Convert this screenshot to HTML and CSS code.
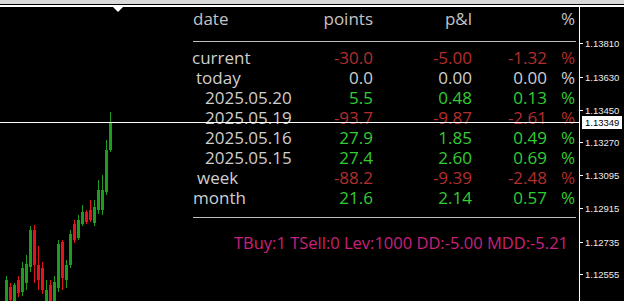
FILE: index.html
```html
<!DOCTYPE html>
<html>
<head>
<meta charset="utf-8">
<link rel="stylesheet" href="styles.css">
</head>
<body>
<div class="topbar"></div>
<div class="chart">
  <div class="plot">
    <svg class="candles" width="579" height="294" viewBox="0 7 579 294">
      <polygon points="113,7 123,7 118,12" fill="#ffffff"/>
      <g stroke-width="1">
        <line x1="6.5" y1="276" x2="6.5" y2="301" stroke="#1f9c1f"/><rect x="5" y="280" width="3" height="21" fill="#1f9c1f"/>
        <line x1="10.5" y1="283" x2="10.5" y2="301" stroke="#e3141c"/><rect x="9" y="287" width="3" height="13" fill="#e3141c"/>
        <line x1="14.5" y1="283" x2="14.5" y2="301" stroke="#1f9c1f"/><rect x="13" y="285" width="3" height="16" fill="#1f9c1f"/>
        <line x1="18.5" y1="276" x2="18.5" y2="297" stroke="#e3141c"/><rect x="17" y="280" width="3" height="13" fill="#e3141c"/>
        <line x1="22.5" y1="262" x2="22.5" y2="296" stroke="#1f9c1f"/><rect x="21" y="268" width="3" height="24" fill="#1f9c1f"/>
        <line x1="26.5" y1="255" x2="26.5" y2="290" stroke="#1f9c1f"/><rect x="25" y="264" width="3" height="19" fill="#1f9c1f"/>
        <line x1="30.5" y1="226" x2="30.5" y2="272" stroke="#1f9c1f"/><rect x="29" y="230" width="3" height="37" fill="#1f9c1f"/>
        <line x1="34.5" y1="225" x2="34.5" y2="283" stroke="#e3141c"/><rect x="33" y="230" width="3" height="35" fill="#e3141c"/>
        <line x1="38.5" y1="246" x2="38.5" y2="290" stroke="#e3141c"/><rect x="37" y="265" width="3" height="15" fill="#e3141c"/>
        <line x1="42.5" y1="262" x2="42.5" y2="294" stroke="#e3141c"/><rect x="41" y="268" width="3" height="22" fill="#e3141c"/>
        <line x1="46.5" y1="280" x2="46.5" y2="301" stroke="#1f9c1f"/><rect x="45" y="290" width="3" height="11" fill="#1f9c1f"/>
        <line x1="50.5" y1="280" x2="50.5" y2="301" stroke="#e3141c"/><rect x="49" y="285" width="3" height="16" fill="#e3141c"/>
        <line x1="54.5" y1="276" x2="54.5" y2="301" stroke="#1f9c1f"/><rect x="53" y="282" width="3" height="19" fill="#1f9c1f"/>
        <line x1="58.5" y1="240" x2="58.5" y2="292" stroke="#1f9c1f"/><rect x="57" y="244" width="3" height="44" fill="#1f9c1f"/>
        <line x1="62.5" y1="240" x2="62.5" y2="290" stroke="#e3141c"/><rect x="61" y="242" width="3" height="36" fill="#e3141c"/>
        <line x1="66.5" y1="260" x2="66.5" y2="288" stroke="#1f9c1f"/><rect x="65" y="265" width="3" height="15" fill="#1f9c1f"/>
        <line x1="70.5" y1="230" x2="70.5" y2="268" stroke="#1f9c1f"/><rect x="69" y="234" width="3" height="31" fill="#1f9c1f"/>
        <line x1="74.5" y1="220" x2="74.5" y2="243" stroke="#e3141c"/><rect x="73" y="224" width="3" height="16" fill="#e3141c"/>
        <line x1="78.5" y1="215" x2="78.5" y2="240" stroke="#1f9c1f"/><rect x="77" y="220" width="3" height="18" fill="#1f9c1f"/>
        <line x1="82.5" y1="205" x2="82.5" y2="226" stroke="#1f9c1f"/><rect x="81" y="212" width="3" height="12" fill="#1f9c1f"/>
        <line x1="86.5" y1="210" x2="86.5" y2="224" stroke="#e3141c"/><rect x="85" y="212" width="3" height="10" fill="#e3141c"/>
        <line x1="90.5" y1="200" x2="90.5" y2="222" stroke="#e3141c"/><rect x="89" y="210" width="3" height="10" fill="#e3141c"/>
        <line x1="94.5" y1="200" x2="94.5" y2="226" stroke="#1f9c1f"/><rect x="93" y="207" width="3" height="16" fill="#1f9c1f"/>
        <line x1="98.5" y1="180" x2="98.5" y2="214" stroke="#1f9c1f"/><rect x="97" y="190" width="3" height="20" fill="#1f9c1f"/>
        <line x1="102.5" y1="175" x2="102.5" y2="215" stroke="#1f9c1f"/><rect x="101" y="190" width="3" height="20" fill="#1f9c1f"/>
        <line x1="106.5" y1="140" x2="106.5" y2="195" stroke="#1f9c1f"/><rect x="105" y="150" width="3" height="42" fill="#1f9c1f"/>
        <line x1="110.5" y1="112" x2="110.5" y2="152" stroke="#1f9c1f"/><rect x="109" y="122" width="3" height="28" fill="#1f9c1f"/>
      </g>
    </svg>

    <div class="table">
      <div class="row head">
        <span class="lbl p2">date</span><span>points</span><span>p&amp;l</span><span></span><span>%</span>
      </div>
      <div class="sep top"></div>
      <div class="row r"><span class="lbl n p1">current</span><span>-30.0</span><span>-5.00</span><span>-1.32</span><span>%</span></div>
      <div class="row n"><span class="lbl p5">today</span><span>0.0</span><span>0.00</span><span>0.00</span><span>%</span></div>
      <div class="row g"><span class="lbl n p14">2025.05.20</span><span>5.5</span><span>0.48</span><span>0.13</span><span>%</span></div>
      <div class="row r"><span class="lbl n p14">2025.05.19</span><span>-93.7</span><span>-9.87</span><span>-2.61</span><span>%</span></div>
      <div class="row g"><span class="lbl n p14">2025.05.16</span><span>27.9</span><span>1.85</span><span>0.49</span><span>%</span></div>
      <div class="row g"><span class="lbl n p14">2025.05.15</span><span>27.4</span><span>2.60</span><span>0.69</span><span>%</span></div>
      <div class="row r"><span class="lbl n p6">week</span><span>-88.2</span><span>-9.39</span><span>-2.48</span><span>%</span></div>
      <div class="row g"><span class="lbl n p2">month</span><span>21.6</span><span>2.14</span><span>0.57</span><span>%</span></div>
      <div class="sep bottom"></div>
      <div class="stats">TBuy:1 TSell:0 Lev:1000 DD:-5.00 MDD:-5.21</div>
    </div>

    <div class="priceline"></div>
  </div>
  <div class="axis">
    <div class="tick" style="top:30px">1.13810</div>
    <div class="tick" style="top:64px">1.13630</div>
    <div class="tick" style="top:97px">1.13450</div>
    <div class="tick" style="top:129px">1.13270</div>
    <div class="tick" style="top:162px">1.13095</div>
    <div class="tick" style="top:195px">1.12915</div>
    <div class="tick" style="top:229px">1.12735</div>
    <div class="tick" style="top:261px">1.12555</div>
    <div class="tick" style="top:291px">1.12375</div>
    <div class="pricebox">1.13349</div>
  </div>
</div>
</body>
</html>
```

FILE: styles.css
```css
html, body {
  margin: 0;
  padding: 0;
  background: #000;
}
body {
  width: 624px;
  height: 301px;
  overflow: hidden;
  font-family: "Open Sans", "Noto Sans", sans-serif;
}
.topbar {
  height: 4px;
  background: #d9d9d9;
  border-bottom: 1px solid #000;
}
.chart {
  display: flex;
  height: 294px;
  border-top: 2px solid #fff;
}
.plot {
  position: relative;
  width: 579px;
  height: 294px;
  overflow: hidden;
}
.candles {
  position: absolute;
  left: 0;
  top: 0;
  display: block;
}
.table {
  position: absolute;
  left: 191px;
  top: 2px;
  width: 385px;
  font-size: 17px;
  line-height: 20px;
  color: #cfcfcf;
}
.row {
  display: grid;
  grid-template-columns: 110px 72px 99px 75px 28px;
  height: 20px;
  white-space: nowrap;
}
.row span {
  text-align: right;
}
.row span.lbl {
  text-align: left;
}
.head {
  color: #c4c4c4;
}
.p1 { padding-left: 1px; }
.p2 { padding-left: 2px; }
.p5 { padding-left: 5px; }
.p6 { padding-left: 6px; }
.p14 { padding-left: 14px; }
.r { color: #b32e2e; }
.g { color: #33cc33; }
.n { color: #cfcfcf; }
.sep {
  height: 1px;
  background: #bdbdbd;
  margin-left: 2px;
}
.sep.top {
  margin-top: 12px;
  margin-bottom: 6px;
}
.sep.bottom {
  margin-top: 9px;
}
.stats {
  margin-top: 15px;
  text-align: right;
  padding-right: 8px;
  font-size: 16.5px;
  line-height: 20px;
  color: #c9217c;
  white-space: nowrap;
}
.priceline {
  position: absolute;
  left: 0;
  top: 115px;
  width: 579px;
  height: 1px;
  background: #fff;
}
.axis {
  position: relative;
  width: 44px;
  border-left: 1px solid #fff;
  font-family: "Liberation Sans", Arial, sans-serif;
  font-size: 9.5px;
  color: #ececec;
}
.tick {
  position: absolute;
  left: 5px;
  height: 13px;
  line-height: 13px;
  white-space: nowrap;
}
.tick::before {
  content: "";
  position: absolute;
  left: -5px;
  top: 6px;
  width: 3px;
  height: 1px;
  background: #fff;
}
.pricebox {
  position: absolute;
  left: 2px;
  top: 109px;
  width: 40px;
  height: 13px;
  line-height: 13px;
  padding-left: 3px;
  box-sizing: border-box;
  background: #fff;
  color: #000;
  white-space: nowrap;
}
```
